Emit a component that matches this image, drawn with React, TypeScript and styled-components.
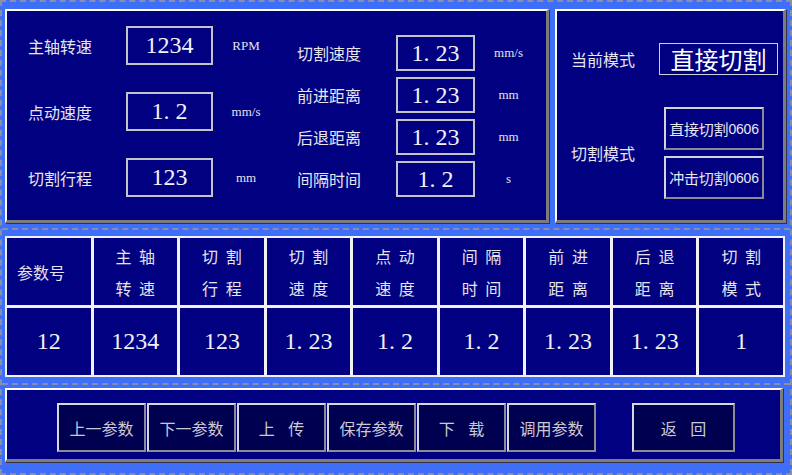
import React from "react";
import styled, { createGlobalStyle } from "styled-components";

const CJK = `"Noto Sans CJK SC", "Noto Sans", sans-serif`;
const SERIF = `"Liberation Serif", "DejaVu Serif", serif`;

const Global = createGlobalStyle`
  html, body { margin: 0; padding: 0; background: #3f6ef8; }
  body { font-family: ${CJK}; }
`;

const Page = styled.div`
  width: 792px;
  height: 475px;
  box-sizing: border-box;
  background: #3f6ef8;
  border: 2px dashed #8a8fa8;
  padding: 7px 0 0 3px;
  display: flex;
  flex-direction: column;
  overflow: hidden;
`;

const TopRow = styled.div`
  display: flex;
  gap: 6px;
  padding-bottom: 5px;
  border-bottom: 2px dashed #8a8fa8;
  margin-left: -3px;
  padding-left: 3px;
`;

const Panel = styled.div<{ $w: number; $h: number }>`
  width: ${(p) => p.$w}px;
  height: ${(p) => p.$h}px;
  box-sizing: border-box;
  background: #000080;
  border-style: solid;
  border-width: 2px 3px 3px 2px;
  border-color: #ffffff #7c7c7c #7c7c7c #ffffff;
  box-shadow: 1px 1px 0 #30304a;
`;

const ParamPanel = styled(Panel)`
  display: flex;
  padding-left: 21px;
`;

const Group = styled.div<{ $top: number; $gap: number; $cols: string }>`
  display: grid;
  grid-template-columns: ${(p) => p.$cols};
  grid-auto-rows: min-content;
  row-gap: ${(p) => p.$gap}px;
  padding-top: ${(p) => p.$top}px;
  align-items: center;
`;

const MidGroup = styled(Group)`
  margin-left: 24px;
`;

const Label = styled.div`
  font-family: ${CJK};
  font-size: 16px;
  color: #e6e6f0;
  white-space: nowrap;
  line-height: 1;
`;

const ValueBox = styled.div<{ $h: number }>`
  height: ${(p) => p.$h}px;
  box-sizing: border-box;
  border: 2px solid #c4c4c8;
  display: flex;
  align-items: center;
  justify-content: center;
  font-family: ${SERIF};
  font-size: 24px;
  color: #f2f2fa;
`;

const Unit = styled.div<{ $pad: number }>`
  padding-left: ${(p) => p.$pad}px;
  text-align: center;
  font-family: ${SERIF};
  font-size: 13px;
  color: #e4e4ee;
  white-space: nowrap;
`;

const Dot = styled.span`
  display: inline-block;
  width: 0.5em;
  text-align: left;
`;

const Num = ({ v }: { v: string }) => {
  const parts = v.split(".");
  if (parts.length === 1) return <>{v}</>;
  return (
    <>
      {parts[0]}
      <Dot>.</Dot>
      {parts[1]}
    </>
  );
};

const ModePanel = styled(Panel)`
  padding: 32px 0 0 14px;
  display: flex;
  flex-direction: column;
`;

const ModeRow = styled.div<{ $mt?: number }>`
  display: flex;
  align-items: center;
  margin-top: ${(p) => p.$mt || 0}px;
`;

const ModeLabel = styled(Label)<{ $w: number }>`
  width: ${(p) => p.$w}px;
`;

const ModeBox = styled.div`
  width: 119px;
  height: 32px;
  box-sizing: border-box;
  border: 1px solid #d0d0d8;
  display: flex;
  align-items: center;
  justify-content: center;
  font-family: ${CJK};
  font-size: 24px;
  color: #ffffff;
  line-height: 1;
`;

const ModeButtons = styled.div`
  display: flex;
  flex-direction: column;
  gap: 6px;
`;

const ModeButton = styled.div`
  width: 100px;
  height: 43px;
  box-sizing: border-box;
  border: 2px solid;
  border-color: #d4d4d8 #8a8a90 #8a8a90 #d4d4d8;
  display: flex;
  align-items: center;
  justify-content: center;
  font-family: ${CJK};
  font-size: 15px;
  color: #e8e8f0;
  white-space: nowrap;
  letter-spacing: -0.2px;
`;

const Digits = styled.span`
  font-family: "Liberation Sans", sans-serif;
  font-size: 14px;
`;

const Table = styled.div`
  margin-top: 6px;
  width: 780px;
  box-sizing: border-box;
  display: grid;
  grid-template-columns: repeat(9, 1fr);
  grid-template-rows: 67px 67px;
  gap: 3px;
  border: 2px solid #f2f2f6;
  background: #f2f2f6;
`;

const HeadCell = styled.div<{ $left?: boolean }>`
  background: #000080;
  display: flex;
  flex-direction: column;
  align-items: ${(p) => (p.$left ? "flex-start" : "center")};
  justify-content: center;
  padding-left: ${(p) => (p.$left ? 10 : 0)}px;
  font-family: ${CJK};
  font-size: 16px;
  line-height: 32px;
  color: #e4e4ee;
  word-spacing: 4px;
  white-space: pre;
`;

const DataCell = styled.div`
  background: #000080;
  display: flex;
  align-items: center;
  justify-content: center;
  font-family: ${SERIF};
  font-size: 24px;
  color: #f0f0f8;
`;

const BottomWrap = styled.div`
  margin-top: 6px;
  margin-left: -3px;
  padding: 3px 0 0 3px;
  border-top: 2px dashed #8a8fa8;
`;

const BottomPanel = styled(Panel)`
  display: flex;
  align-items: flex-start;
  padding: 13px 0 0 50px;
`;

const ActionRow = styled.div`
  display: flex;
  gap: 1px;
`;

const ActionButton = styled.div<{ $w?: number; $ml?: number }>`
  width: ${(p) => p.$w || 89}px;
  height: 49px;
  margin-left: ${(p) => p.$ml || 0}px;
  box-sizing: border-box;
  background: #000050;
  border: 2px solid;
  border-color: #d8d8dc #8c8c92 #8c8c92 #d8d8dc;
  display: flex;
  align-items: center;
  justify-content: center;
  font-family: ${CJK};
  font-size: 16px;
  color: #cacad6;
  white-space: pre;
  word-spacing: 10px;
`;

const leftRows = [
  { label: "主轴转速", value: "1234", unit: "RPM" },
  { label: "点动速度", value: "1.2", unit: "mm/s" },
  { label: "切割行程", value: "123", unit: "mm" },
];

const midRows = [
  { label: "切割速度", value: "1.23", unit: "mm/s" },
  { label: "前进距离", value: "1.23", unit: "mm" },
  { label: "后退距离", value: "1.23", unit: "mm" },
  { label: "间隔时间", value: "1.2", unit: "s" },
];

const headers = [
  ["参数号"],
  ["主 轴", "转 速"],
  ["切 割", "行 程"],
  ["切 割", "速 度"],
  ["点 动", "速 度"],
  ["间 隔", "时 间"],
  ["前 进", "距 离"],
  ["后 退", "距 离"],
  ["切 割", "模 式"],
];

const values = ["12", "1234", "123", "1.23", "1.2", "1.2", "1.23", "1.23", "1"];

const actions = ["上一参数", "下一参数", "上 传", "保存参数", "下 载", "调用参数"];

export default function App() {
  return (
    <>
      <Global />
      <Page>
        <TopRow>
          <ParamPanel $w={544} $h={214}>
            <Group $top={15} $gap={27} $cols="98px 87px 60px">
              {leftRows.map((r) => (
                <React.Fragment key={r.label}>
                  <Label>{r.label}</Label>
                  <ValueBox $h={39}>
                    <Num v={r.value} />
                  </ValueBox>
                  <Unit $pad={6}>{r.unit}</Unit>
                </React.Fragment>
              ))}
            </Group>
            <MidGroup $top={24} $gap={6} $cols="99px 79px 55px">
              {midRows.map((r) => (
                <React.Fragment key={r.label}>
                  <Label>{r.label}</Label>
                  <ValueBox $h={36}>
                    <Num v={r.value} />
                  </ValueBox>
                  <Unit $pad={12}>{r.unit}</Unit>
                </React.Fragment>
              ))}
            </MidGroup>
          </ParamPanel>
          <ModePanel $w={231} $h={214}>
            <ModeRow>
              <ModeLabel $w={88}>当前模式</ModeLabel>
              <ModeBox>直接切割</ModeBox>
            </ModeRow>
            <ModeRow $mt={32}>
              <ModeLabel $w={93}>切割模式</ModeLabel>
              <ModeButtons>
                <ModeButton>
                  直接切割<Digits>0606</Digits>
                </ModeButton>
                <ModeButton>
                  冲击切割<Digits>0606</Digits>
                </ModeButton>
              </ModeButtons>
            </ModeRow>
          </ModePanel>
        </TopRow>
        <Table>
          {headers.map((h, i) => (
            <HeadCell key={"h" + i} $left={i === 0}>
              {h.map((line, j) => (
                <span key={j}>{line}</span>
              ))}
            </HeadCell>
          ))}
          {values.map((v, i) => (
            <DataCell key={"v" + i}>
              <Num v={v} />
            </DataCell>
          ))}
        </Table>
        <BottomWrap>
          <BottomPanel $w={778} $h={74}>
            <ActionRow>
              {actions.map((a) => (
                <ActionButton key={a}>{a}</ActionButton>
              ))}
            </ActionRow>
            <ActionButton $w={103} $ml={36}>
              返 回
            </ActionButton>
          </BottomPanel>
        </BottomWrap>
      </Page>
    </>
  );
}
